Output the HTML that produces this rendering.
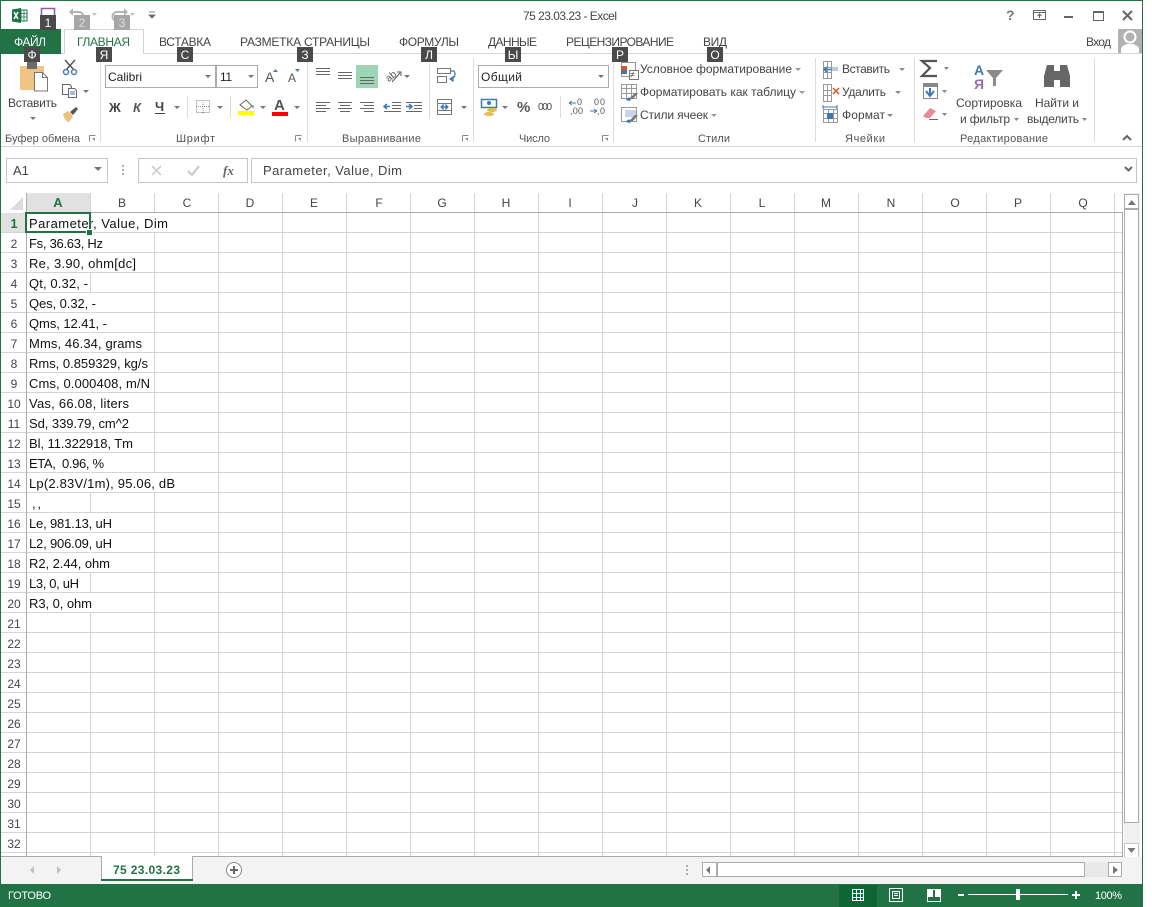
<!DOCTYPE html>
<html lang="ru"><head><meta charset="utf-8"><title>75 23.03.23 - Excel</title>
<style>
html,body{margin:0;padding:0;background:#fff;width:1152px;height:907px;overflow:hidden}
svg{display:block}
text{font-family:"Liberation Sans","DejaVu Sans",sans-serif;font-size:12px;fill:#444}
.t{font-size:12px;fill:#444}
.c{font-size:13px;fill:#111}
.h{font-size:12px;fill:#444;text-anchor:middle}
.k{font-size:12px;fill:#fff;text-anchor:middle}
.g{font-size:11px;fill:#555}
.l{shape-rendering:crispEdges}
</style></head><body>
<svg width="1152" height="907" viewBox="0 0 1152 907" xmlns="http://www.w3.org/2000/svg">
<rect width="1152" height="907" fill="#fff"/>
<!-- window border -->
<g class="l">
<rect x="0" y="0" width="1143" height="1" fill="#217346"/>
<rect x="0" y="0" width="1" height="907" fill="#217346"/>
<rect x="1142" y="0" width="1" height="907" fill="#217346"/>
<!-- ribbon lines -->
<rect x="1" y="53" width="1141" height="1" fill="#d4d4d4"/>
<rect x="1" y="146" width="1141" height="1" fill="#d4d4d4"/>
<rect x="1" y="29" width="60" height="25" fill="#217346"/>
<rect x="64" y="29" width="80" height="25" fill="#fff"/>
<rect x="64" y="29" width="80" height="1" fill="#d4d4d4"/>
<rect x="64" y="29" width="1" height="25" fill="#d4d4d4"/>
<rect x="143" y="29" width="1" height="25" fill="#d4d4d4"/>
<!-- group separators -->
<g fill="#dcdcdc">
<rect x="100" y="58" width="1" height="84"/><rect x="307" y="58" width="1" height="84"/><rect x="473" y="58" width="1" height="84"/><rect x="613" y="58" width="1" height="84"/><rect x="815" y="58" width="1" height="84"/><rect x="914" y="58" width="1" height="84"/><rect x="1094" y="58" width="1" height="84"/>
<rect x="187" y="96" width="1" height="22"/><rect x="230" y="96" width="1" height="22"/><rect x="429" y="64" width="1" height="55"/><rect x="560" y="96" width="1" height="22"/>
</g>
</g>
<!-- QAT -->
<rect x="12" y="8" width="15" height="15" fill="#fff"/>
<path d="M12 9.5 21 8v15l-9-1.5z" fill="#217346"/>
<path d="M21 10h6v11h-6z" fill="#fff" stroke="#217346"/>
<path d="M21 13.5h6M21 17h6M24 10v11" stroke="#217346" stroke-width=".8"/>
<path d="M14 12l4 7M18 12l-4 7" stroke="#fff" stroke-width="1.5"/>
<path d="M41.5 15V8.5h13V15" fill="none" stroke="#8e5ba6" stroke-width="1.5"/>
<path d="M73 12h6a4.500 4.500 0 0 1 0 9h-3" fill="none" stroke="#b4b4b4" stroke-width="2"/>
<path d="M73 8v8l-4-4z" fill="#b4b4b4"/>
<path d="M92 13h5l-2.500 3z" fill="#c4c4c4"/>
<path d="M124 12h-7a4.500 4.500 0 0 0 0 9h3" fill="none" stroke="#b4b4b4" stroke-width="2"/>
<path d="M124 8v8l4-4z" fill="#b4b4b4"/>
<path d="M130 13h5l-2.500 3z" fill="#c4c4c4"/>
<path d="M149 12h6M149 15h6l-3 3z" stroke="#666" fill="#666" stroke-width=".8"/>
<!-- title -->
<text x="523" y="20" textLength="94" style="font-size:12px">75 23.03.23 - Excel</text>
<!-- window controls -->
<text x="1006" y="20" style="font-size:14px;font-weight:bold;fill:#777">?</text>
<path d="M1033.500 10.500h12v9h-12zM1033.500 12.500h12M1039.500 18v-4M1037.500 16l2-2 2 2" fill="none" stroke="#666"/>
<rect x="1064" y="16" width="9" height="2" fill="#666" class="l"/>
<path d="M1093.500 11.500h10v9h-10z" fill="none" stroke="#666"/><rect x="1093" y="11" width="11" height="2" fill="#666" class="l"/>
<path d="M1123 11l9 9M1132 11l-9 9" stroke="#666" stroke-width="2"/>
<!-- tabs -->
<text x="14" y="46" textLength="32" style="font-size:12px;fill:#fff">ФАЙЛ</text>
<text x="77" y="46" textLength="53" style="font-size:12px;fill:#217346">ГЛАВНАЯ</text>
<text x="159" y="46" textLength="52" class="t">ВСТАВКА</text>
<text x="240" y="46" textLength="130" class="t">РАЗМЕТКА СТРАНИЦЫ</text>
<text x="399" y="46" textLength="60" class="t">ФОРМУЛЫ</text>
<text x="488" y="46" textLength="49" class="t">ДАННЫЕ</text>
<text x="566" y="46" textLength="108" class="t">РЕЦЕНЗИРОВАНИЕ</text>
<text x="703" y="46" textLength="24" class="t">ВИД</text>
<text x="1086" y="46" textLength="25" style="font-size:12px">Вход</text>
<rect x="1118" y="29" width="24" height="24" fill="#b2b2b2" class="l"/>
<circle cx="1130" cy="37" r="5.500" fill="#b2b2b2" stroke="#fff" stroke-width="2"/>
<path d="M1121 53v-4c0-3 4-4 6-5h6c2 1 6 2 6 5v4z" fill="#fff"/>
<!-- clipboard group -->
<rect x="20" y="66" width="24" height="24" rx="1" fill="#eec582"/>
<rect x="27" y="62" width="10" height="7" fill="#6b6b6b"/>
<path d="M34.500 72.500h8l5 5v13.500h-13z" fill="#fff" stroke="#777"/>
<path d="M42.500 72.500v5h5" fill="none" stroke="#777"/>
<text x="8" y="107" textLength="49" class="t">Вставить</text>
<path d="M30 117h6l-3 3z" fill="#777"/>
<path d="M65 60l9 10M75 60l-9 10" stroke="#555" stroke-width="1.5"/>
<circle cx="66" cy="72" r="2.500" fill="none" stroke="#4a7db5" stroke-width="1.500"/><circle cx="74" cy="72" r="2.500" fill="none" stroke="#4a7db5" stroke-width="1.500"/>
<path d="M62.500 84.500h7l2 2v8h-9z" fill="#fff" stroke="#666"/>
<path d="M68.500 88.500h6l2 2v7h-8z" fill="#fff" stroke="#666"/>
<path d="M70 92h5M70 94h5" stroke="#4a7db5"/>
<path d="M83 90h6l-3 3z" fill="#777"/>
<path d="M63 114l5-3 5 5-4 6c-2 0-5-3-6-8z" fill="#e9c27d"/>
<path d="M70 112l6-5 2 2-5 6z" fill="#555"/>
<!-- font group -->
<g fill="#fff" stroke="#ababab" class="l">
<rect x="105.500" y="65.500" width="110" height="22"/><rect x="216.500" y="65.500" width="41" height="22"/>
<rect x="478.500" y="65.500" width="130" height="22"/>
</g>
<text x="108" y="81" textLength="34" style="font-size:12px;fill:#222">Calibri</text>
<text x="220" y="81" textLength="12" style="font-size:12px;fill:#222">11</text>
<path d="M205 75h6l-3 3zM248 75h6l-3 3zM598 75h6l-3 3z" fill="#777"/>
<text x="265" y="82" style="font-size:14px;fill:#555">A</text>
<path d="M273 72h5l-2.500-3z" fill="#4a7db5"/>
<text x="288" y="82" style="font-size:12px;fill:#555">A</text>
<path d="M295 69h5l-2.500 3z" fill="#4a7db5"/>
<text x="109" y="112" textLength="13" style="font-size:13px;font-weight:bold;fill:#444">Ж</text>
<text x="133" y="112" textLength="9" style="font-size:13px;font-weight:bold;font-style:italic;fill:#555">К</text>
<text x="155" y="111" textLength="10" style="font-size:13px;font-weight:bold;fill:#444">Ч</text>
<rect x="155" y="113" width="10" height="1" fill="#444" class="l"/>
<path d="M174 106h6l-3 3zM217 106h6l-3 3zM260 106h6l-3 3zM294 106h6l-3 3z" fill="#777"/>
<path d="M196.500 100.500h13v12h-13zM203 100v13M196 106.500h14" fill="none" stroke="#888" stroke-dasharray="1 1"/>
<path d="M240 105l6-5 6 6-5 4z" fill="#fff" stroke="#666"/><path d="M253 105c1 1 1 3 0 3-1 0-1-2 0-3z" fill="#4a7db5"/>
<rect x="238" y="111" width="16" height="4" fill="#ffff00" class="l"/>
<text x="274" y="110" style="font-size:15px;font-weight:bold;fill:#555">A</text>
<rect x="272" y="112" width="16" height="4" fill="#ff0000" class="l"/>
<text x="176" y="142" textLength="39" class="g">Шрифт</text>
<text x="5" y="142" textLength="75" class="g">Буфер обмена</text>
<text x="342" y="142" textLength="79" class="g">Выравнивание</text>
<text x="519" y="142" textLength="31" class="g">Число</text>
<text x="698" y="142" textLength="32" class="g">Стили</text>
<text x="845" y="142" textLength="40" class="g">Ячейки</text>
<text x="960" y="142" textLength="88" class="g">Редактирование</text>
<g fill="none" stroke="#888" class="l"><path d="M89.500 135.500h6M89.500 135.500v6M295.500 135.500h6M295.500 135.500v6M462.500 135.500h6M462.500 135.500v6M602.500 135.500h6M602.500 135.500v6"/></g>
<path d="M92 138l3 3v-3zM298 138l3 3v-3zM465 138l3 3v-3zM605 138l3 3v-3z" fill="#888"/>
<!-- align -->
<rect x="356" y="65" width="22" height="23" fill="#9fd5b7" class="l"/>
<g stroke="#666" class="l" fill="none">
<path d="M316 68.500h14M316 71.500h14M316 74.500h14M338 72.500h14M338 75.500h14M338 78.500h14M360 77.500h14M360 80.500h14M360 83.500h14"/>
<path d="M316 102.500h14M316 105.500h10M316 108.500h14M316 111.500h10M338 102.500h14M340 105.500h10M338 108.500h14M340 111.500h10M360 102.500h14M364 105.500h10M360 108.500h14M364 111.500h10"/>
<path d="M392 102.500h9M392 105.500h9M392 108.500h9M384 111.500h17M406 102.500h16M414 105.500h8M414 108.500h8M406 111.500h16"/>
</g>
<path d="M390 106.500l-6 0M387 104l-3 2.500 3 2.500" stroke="#3d78b8" stroke-width="1.500" fill="none"/>
<path d="M406 106.500h6M409 104l3 2.500-3 2.500" stroke="#3d78b8" stroke-width="1.500" fill="none"/>
<text x="385" y="80" transform="rotate(-40 390 76)" style="font-size:10px;fill:#555">ab</text>
<path d="M392 82l8-9M397 72l4 0 0 4" stroke="#555" fill="none"/>
<path d="M404 75h6l-3 3zM461 106h6l-3 3z" fill="#777"/>
<g fill="none" stroke="#777" class="l"><path d="M437.500 68.500h13v5h-13zM437.500 76.500h9v6h-9zM437.500 99.500h14v15h-14zM437.500 103.500h14M437.500 110.500h14"/></g>
<path d="M450 71h4c2 3 1 7-3 8M450 79l3-2v4zM441 107h7M441 107l2-2v4zM448 107l-2-2v4z" fill="none" stroke="#3d78b8" stroke-width="1.200"/>
<!-- number -->
<text x="481" y="81" textLength="41" style="font-size:12px;fill:#222">Общий</text>
<rect x="481.500" y="99.500" width="15" height="8" fill="#fff" stroke="#3d78b8" stroke-width="1.500"/><circle cx="489" cy="103" r="2" fill="#3d78b8"/>
<ellipse cx="492" cy="110" rx="5" ry="2" fill="#e9b84f"/><ellipse cx="489" cy="114" rx="5" ry="2" fill="#e9b84f"/>
<path d="M502 106h6l-3 3z" fill="#777"/>
<text x="517" y="112" style="font-size:15px;font-weight:bold;fill:#555">%</text>
<text x="538" y="110" textLength="14" style="font-size:10px;fill:#444">000</text>
<text x="577" y="105" style="font-size:9px;fill:#555">0</text>
<text x="570" y="114" textLength="13" style="font-size:9px;fill:#555">,00</text>
<path d="M569 103h7M569 103l3-2M569 103l3 2" stroke="#3d78b8" fill="none"/>
<text x="594" y="105" textLength="11" style="font-size:9px;fill:#555">00</text>
<text x="597" y="114" textLength="8" style="font-size:9px;fill:#555">,0</text>
<path d="M590 111h7M597 111l-3-2M597 111l-3 2" stroke="#3d78b8" fill="none"/>
<!-- styles -->
<g class="l">
<rect x="621.500" y="62.500" width="14" height="14" fill="#fff" stroke="#999"/>
<rect x="621" y="66" width="6" height="4" fill="#d2572a"/><rect x="621" y="70" width="6" height="4" fill="#3d78b8"/>
<rect x="629.500" y="70.500" width="9" height="9" fill="#fff" stroke="#777"/>
</g>
<text x="630" y="77.500" style="font-size:9px;fill:#444">≠</text>
<g fill="none" stroke="#999" class="l"><path d="M621.500 84.500h15v14h-15zM621.500 88.500h15M621.500 93.500h15M626.500 84v15M631.500 84v15M621.500 107.500h15v14h-15z"/></g>
<rect x="625" y="110" width="11" height="7" fill="#c6d6e6" class="l"/>
<path d="M629 99l6-6 3 0-5 6zM629 121l6-6 3 0-5 6z" fill="#777"/><path d="M626 100c1-3 4-3 5-1l-1 2z M626 122c1-3 4-3 5-1l-1 2z" fill="#3d78b8"/>
<text x="640" y="73" textLength="152" class="t">Условное форматирование</text>
<text x="640" y="96" textLength="156" class="t">Форматировать как таблицу</text>
<text x="640" y="119" textLength="68" class="t">Стили ячеек</text>
<path d="M795 68h6l-3 3zM799 91h6l-3 3zM711 114h6l-3 3z" fill="#999"/>
<!-- cells -->
<g fill="none" stroke="#999" class="l"><path d="M823.500 61.500h8v17h-8zM823.500 67.500h8M823.500 72.500h8M827.500 61v18M823.500 84.500h8v17h-8zM823.500 90.500h8M823.500 95.500h8M827.500 84v18M823.500 109.500h14v13h-14zM823.500 113.500h14M823.500 118.500h14M828.500 109v14M833.500 109v14"/></g>
<path d="M824 69.500h8M827 67l-3 2.500 3 2.500" stroke="#3d78b8" stroke-width="1.500" fill="none"/><rect x="832" y="67" width="6" height="4" fill="#b9c9d9"/>
<path d="M833 88l6 6M839 88l-6 6" stroke="#d2572a" stroke-width="1.500"/>
<rect x="827" y="113" width="6" height="6" fill="#3d78b8" class="l"/>
<path d="M823 107h14M823 105v4M837 105v4" stroke="#3d78b8"/>
<text x="842" y="73" textLength="48" class="t">Вставить</text>
<text x="842" y="96" textLength="44" class="t">Удалить</text>
<text x="842" y="119" textLength="43" class="t">Формат</text>
<path d="M899 68h6l-3 3zM895 91h6l-3 3zM887 114h6l-3 3z" fill="#888"/>
<!-- editing -->
<path d="M937 61h-15l8 7-8 8h15" fill="none" stroke="#555" stroke-width="2.200"/>
<path d="M944 67h5l-2.500 3zM942 90h5l-2.500 3zM942 113h5l-2.500 3zM1014 118h5l-2.500 3zM1082 118h5l-2.500 3z" fill="#888"/>
<rect x="923.500" y="83.500" width="14" height="15" fill="#fff" stroke="#888" class="l"/><rect x="924" y="84" width="13" height="3" fill="#888"/>
<path d="M930 88v7M926 91l4 5 4-5" stroke="#3d78b8" stroke-width="2" fill="none"/>
<path d="M923 116l7-8 6 3-6 7h-4z" fill="#e98a9a"/><rect x="929" y="119" width="9" height="1" fill="#666"/>
<text x="974" y="75" style="font-size:14px;font-weight:bold;fill:#3d78b8">A</text>
<text x="974" y="89" style="font-size:14px;font-weight:bold;fill:#9b6bb3">Я</text>
<path d="M986 70h17l-7 8v8h-3v-8z" fill="#8a8a8a"/>
<text x="956" y="107" textLength="66" class="t">Сортировка</text>
<text x="960" y="123" textLength="50" class="t">и фильтр</text>
<text x="1035" y="107" textLength="44" class="t">Найти и</text>
<text x="1027" y="123" textLength="52" class="t">выделить</text>
<path d="M1047 65h7v22h-10v-11zM1060 65h7l3 11v11h-10z" fill="#666"/><rect x="1054" y="71" width="6" height="9" fill="#666"/>
<path d="M1123 140l4-4 4 4" fill="none" stroke="#666" stroke-width="2"/>
<!-- keytips -->
<g fill="#4a4a4a" class="l">
<rect x="40" y="15" width="16" height="15"/><rect x="24" y="47" width="16" height="15"/><rect x="96" y="47" width="16" height="15"/><rect x="177" y="47" width="16" height="15"/><rect x="297" y="47" width="16" height="15"/><rect x="421" y="47" width="16" height="15"/><rect x="505" y="47" width="16" height="15"/><rect x="612" y="47" width="16" height="15"/><rect x="707" y="47" width="16" height="15"/>
<rect x="74" y="15" width="16" height="15" fill="#a6a6a6"/><rect x="114" y="15" width="16" height="15" fill="#a6a6a6"/>
</g>
<text class="k" x="48" y="27">1</text><text class="k" x="82" y="27" style="fill:#ddd">2</text><text class="k" x="122" y="27" style="fill:#ddd">3</text>
<text class="k" x="32" y="59">Ф</text><text class="k" x="104" y="59">Я</text><text class="k" x="185" y="59">С</text><text class="k" x="305" y="59">З</text><text class="k" x="429" y="59">Л</text><text class="k" x="513" y="59">Ы</text><text class="k" x="620" y="59">Р</text><text class="k" x="715" y="59">О</text>
<!-- formula bar -->
<g fill="#fff" stroke="#c6c6c6" class="l">
<rect x="6.500" y="158.500" width="101" height="24"/><rect x="138.500" y="158.500" width="109" height="24"/><rect x="251.500" y="158.500" width="885" height="24"/>
</g>
<text x="13" y="175" style="font-size:13px;fill:#444">A1</text>
<path d="M94 167h8l-4 4z" fill="#777"/>
<g fill="#b0b0b0" class="l"><rect x="122" y="165" width="2" height="2"/><rect x="122" y="169" width="2" height="2"/><rect x="122" y="173" width="2" height="2"/></g>
<path d="M152 166l9 9M161 166l-9 9" stroke="#c8c8c8" stroke-width="1.500"/>
<path d="M188 171l4 4 7-9" fill="none" stroke="#c8c8c8" stroke-width="2"/>
<text x="223" y="175" style="font-family:'Liberation Serif',serif;font-style:italic;font-weight:bold;font-size:13px;fill:#666">fx</text>
<text x="263" y="175" textLength="139" class="c" style="fill:#444">Parameter, Value, Dim</text>
<path d="M1125 167l3.500 3.500 3.500-3.500" fill="none" stroke="#666" stroke-width="2"/>
<!-- sheet grid -->
<g class="l">
<rect x="27" y="193" width="1095" height="19" fill="#fff"/>
<rect x="26" y="193" width="65" height="19" fill="#e1e1e1"/>
<rect x="1" y="213" width="25" height="19" fill="#e1e1e1"/>
<g fill="#d4d4d4">
<rect x="1" y="232" width="1121" height="1"/><rect x="1" y="252" width="1121" height="1"/><rect x="1" y="272" width="1121" height="1"/><rect x="1" y="292" width="1121" height="1"/><rect x="1" y="312" width="1121" height="1"/><rect x="1" y="332" width="1121" height="1"/><rect x="1" y="352" width="1121" height="1"/><rect x="1" y="372" width="1121" height="1"/><rect x="1" y="392" width="1121" height="1"/><rect x="1" y="412" width="1121" height="1"/><rect x="1" y="432" width="1121" height="1"/><rect x="1" y="452" width="1121" height="1"/><rect x="1" y="472" width="1121" height="1"/><rect x="1" y="492" width="1121" height="1"/><rect x="1" y="512" width="1121" height="1"/><rect x="1" y="532" width="1121" height="1"/><rect x="1" y="552" width="1121" height="1"/><rect x="1" y="572" width="1121" height="1"/><rect x="1" y="592" width="1121" height="1"/><rect x="1" y="612" width="1121" height="1"/><rect x="1" y="632" width="1121" height="1"/><rect x="1" y="652" width="1121" height="1"/><rect x="1" y="672" width="1121" height="1"/><rect x="1" y="692" width="1121" height="1"/><rect x="1" y="712" width="1121" height="1"/><rect x="1" y="732" width="1121" height="1"/><rect x="1" y="752" width="1121" height="1"/><rect x="1" y="772" width="1121" height="1"/><rect x="1" y="792" width="1121" height="1"/><rect x="1" y="812" width="1121" height="1"/><rect x="1" y="832" width="1121" height="1"/><rect x="1" y="852" width="1121" height="1"/>
<rect x="154" y="193" width="1" height="663"/><rect x="218" y="193" width="1" height="663"/><rect x="282" y="193" width="1" height="663"/><rect x="346" y="193" width="1" height="663"/><rect x="410" y="193" width="1" height="663"/><rect x="474" y="193" width="1" height="663"/><rect x="538" y="193" width="1" height="663"/><rect x="602" y="193" width="1" height="663"/><rect x="666" y="193" width="1" height="663"/><rect x="730" y="193" width="1" height="663"/><rect x="794" y="193" width="1" height="663"/><rect x="858" y="193" width="1" height="663"/><rect x="922" y="193" width="1" height="663"/><rect x="986" y="193" width="1" height="663"/><rect x="1050" y="193" width="1" height="663"/><rect x="1114" y="193" width="1" height="663"/>
<rect x="90" y="193" width="1" height="663"/>
</g>
<!-- hide gridlines under overflowing text -->
<g fill="#fff">
<rect x="90" y="213" width="1" height="19"/><rect x="154" y="213" width="1" height="19"/>
<rect x="90" y="233" width="1" height="39"/>
<rect x="90" y="293" width="1" height="199"/><rect x="154" y="473" width="1" height="19"/>
<rect x="90" y="513" width="1" height="59"/><rect x="90" y="593" width="1" height="19"/>
</g>
<rect x="26" y="212" width="1096" height="1" fill="#ababab"/>
<rect x="26" y="193" width="1" height="663" fill="#ababab"/>
<rect x="1" y="856" width="1122" height="1" fill="#ababab"/>
<rect x="1122" y="212" width="1" height="645" fill="#ababab"/>
</g>
<path d="M23 197v13h-13z" fill="#dcdcdc"/>
<g class="h">
<text class="h" x="58" y="207" style="font-weight:bold;fill:#217346;font-size:13px">A</text>
<text class="h" x="122" y="207">B</text><text class="h" x="187" y="207">C</text><text class="h" x="250" y="207">D</text><text class="h" x="314" y="207">E</text><text class="h" x="379" y="207">F</text><text class="h" x="442" y="207">G</text><text class="h" x="506" y="207">H</text><text class="h" x="570" y="207">I</text><text class="h" x="635" y="207">J</text><text class="h" x="698" y="207">K</text><text class="h" x="762" y="207">L</text><text class="h" x="826" y="207">M</text><text class="h" x="891" y="207">N</text><text class="h" x="955" y="207">O</text><text class="h" x="1018" y="207">P</text><text class="h" x="1083" y="207">Q</text>
</g>
<text class="h" x="14" y="228" style="font-weight:bold;fill:#217346;font-size:13px">1</text>
<text class="h" x="14" y="248">2</text><text class="h" x="14" y="268">3</text><text class="h" x="14" y="288">4</text><text class="h" x="14" y="308">5</text><text class="h" x="14" y="328">6</text><text class="h" x="14" y="348">7</text><text class="h" x="14" y="368">8</text><text class="h" x="14" y="388">9</text><text class="h" x="14" y="408">10</text><text class="h" x="14" y="428">11</text><text class="h" x="14" y="448">12</text><text class="h" x="14" y="468">13</text><text class="h" x="14" y="488">14</text><text class="h" x="14" y="508">15</text><text class="h" x="14" y="528">16</text><text class="h" x="14" y="548">17</text><text class="h" x="14" y="568">18</text><text class="h" x="14" y="588">19</text><text class="h" x="14" y="608">20</text><text class="h" x="14" y="628">21</text><text class="h" x="14" y="648">22</text><text class="h" x="14" y="668">23</text><text class="h" x="14" y="688">24</text><text class="h" x="14" y="708">25</text><text class="h" x="14" y="728">26</text><text class="h" x="14" y="748">27</text><text class="h" x="14" y="768">28</text><text class="h" x="14" y="788">29</text><text class="h" x="14" y="808">30</text><text class="h" x="14" y="828">31</text><text class="h" x="14" y="848">32</text>
<!-- cells -->
<text class="c" x="29" y="228" textLength="139">Parameter, Value, Dim</text>
<text class="c" x="29" y="248" textLength="74">Fs, 36.63, Hz</text>
<text class="c" x="29" y="268" textLength="107">Re, 3.90, ohm[dc]</text>
<text class="c" x="29" y="288" textLength="59">Qt, 0.32, -</text>
<text class="c" x="29" y="308" textLength="67">Qes, 0.32, -</text>
<text class="c" x="29" y="328" textLength="78">Qms, 12.41, -</text>
<text class="c" x="29" y="348" textLength="113">Mms, 46.34, grams</text>
<text class="c" x="29" y="368" textLength="119">Rms, 0.859329, kg/s</text>
<text class="c" x="29" y="388" textLength="121">Cms, 0.000408, m/N</text>
<text class="c" x="29" y="408" textLength="100">Vas, 66.08, liters</text>
<text class="c" x="29" y="428" textLength="100">Sd, 339.79, cm^2</text>
<text class="c" x="29" y="448" textLength="104">Bl, 11.322918, Tm</text>
<text class="c" x="29" y="468" textLength="75" xml:space="preserve">ETA,  0.96, %</text>
<text class="c" x="29" y="488" textLength="146">Lp(2.83V/1m), 95.06, dB</text>
<text class="c" x="32" y="508" textLength="9">, ,</text>
<text class="c" x="29" y="528" textLength="83">Le, 981.13, uH</text>
<text class="c" x="29" y="548" textLength="83">L2, 906.09, uH</text>
<text class="c" x="29" y="568" textLength="81">R2, 2.44, ohm</text>
<text class="c" x="29" y="588" textLength="50">L3, 0, uH</text>
<text class="c" x="29" y="608" textLength="63">R3, 0, ohm</text>
<!-- selection -->
<g class="l">
<rect x="25" y="212" width="66" height="2" fill="#217346"/><rect x="25" y="231" width="66" height="2" fill="#217346"/>
<rect x="25" y="212" width="2" height="21" fill="#217346"/><rect x="89" y="212" width="2" height="21" fill="#217346"/>
<rect x="86" y="229" width="7" height="7" fill="#fff"/>
<rect x="87" y="230" width="5" height="5" fill="#217346"/>
<!-- vertical scrollbar -->
<rect x="1124" y="193" width="16" height="664" fill="#f0f0f0"/>
<rect x="1124.500" y="194.500" width="14" height="14" fill="#fff" stroke="#ababab"/>
<rect x="1124.500" y="209.500" width="14" height="613" fill="#fff" stroke="#ababab"/>
<rect x="1124.500" y="843.500" width="14" height="14" fill="#fff" stroke="#c6c6c6"/>
<!-- tabs bar -->
<rect x="1" y="857" width="1141" height="27" fill="#f3f3f3"/>
<rect x="101" y="856" width="92" height="24" fill="#fff"/>
<rect x="101" y="856" width="1" height="25" fill="#ababab"/><rect x="192" y="856" width="1" height="25" fill="#ababab"/>
<rect x="101" y="879" width="92" height="2" fill="#217346"/>
<rect x="702.500" y="862.500" width="14" height="14" fill="#fff" stroke="#ababab"/>
<rect x="717.500" y="862.500" width="367" height="14" fill="#fff" stroke="#ababab"/>
<rect x="1085" y="862" width="23" height="15" fill="#e9e9e9"/>
<rect x="1108.500" y="862.500" width="13" height="14" fill="#fff" stroke="#ababab"/>
<g fill="#b0b0b0"><rect x="686" y="865" width="2" height="2"/><rect x="686" y="869" width="2" height="2"/><rect x="686" y="873" width="2" height="2"/></g>
<!-- status -->
<rect x="0" y="884" width="1143" height="23" fill="#217346"/>
<rect x="839" y="885" width="38" height="22" fill="#0f6534"/>
</g>
<path d="M1128 200l-3.500 5h8zM1128 853l-4-5h8z" transform="translate(3.500 0)" fill="#777"/>
<path d="M710 866l-4 4 4 4z" fill="#777"/><path d="M1113 866l5 4-5 4z" fill="#777"/>
<path d="M34 866l-4 4 4 4z" fill="#c0c0c0"/><path d="M57 866l4 4-4 4z" fill="#c0c0c0"/>
<text x="113" y="874" textLength="67" style="font-size:12px;font-weight:bold;fill:#217346">75 23.03.23</text>
<circle cx="234" cy="870" r="7.500" fill="#fff" stroke="#888"/><path d="M230 870h8M234 866v8" stroke="#666" stroke-width="2"/>
<text x="8" y="899" textLength="43" style="font-size:11px;fill:#fff">ГОТОВО</text>
<g fill="none" stroke="#fff" class="l">
<path d="M852.500 889.500h11v11h-11zM852.500 893.500h11M852.500 897.500h11M856.500 889v12M860.500 889v12"/>
<path d="M889.500 888.500h13v13h-13zM892.500 891.500h7v7h-7zM894 893.500h4M894 895.500h4"/>
<path d="M927.500 889.500h13v12h-13z"/>
</g>
<g fill="#fff" class="l">
<rect x="927" y="889" width="6" height="8"/><rect x="935" y="889" width="6" height="8"/>
<rect x="958" y="894" width="6" height="2"/><rect x="968" y="894" width="100" height="1"/><rect x="1016" y="889" width="4" height="11"/>
<rect x="1072" y="894" width="8" height="2"/><rect x="1075" y="891" width="2" height="8"/>
</g>
<text x="1095" y="899" textLength="27" style="font-size:11px;fill:#fff">100%</text>
</svg>
</body></html>
